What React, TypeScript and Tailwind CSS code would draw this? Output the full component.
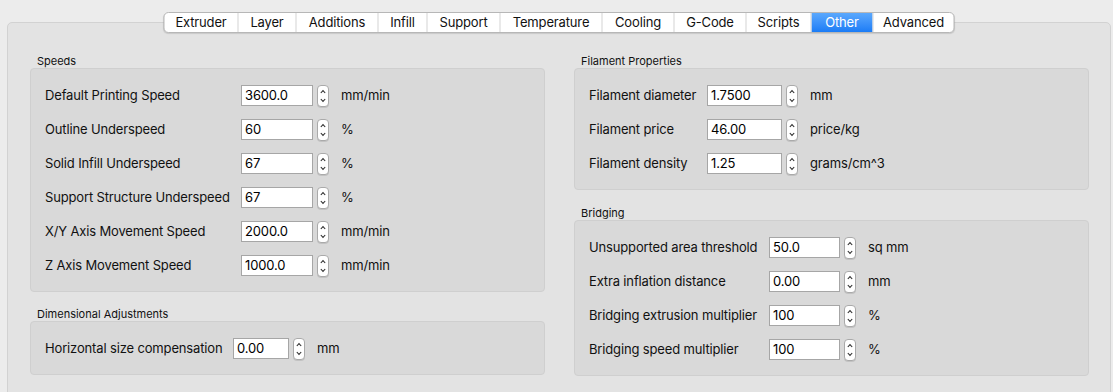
import React from 'react';

type Row = [string, string, string];

const tabs: [string, string][] = [
  ['Extruder', 'w-[73px]'],
  ['Layer', 'w-[58px]'],
  ['Additions', 'w-[82px]'],
  ['Infill', 'w-[49px]'],
  ['Support', 'w-[73px]'],
  ['Temperature', 'w-[102px]'],
  ['Cooling', 'w-[72px]'],
  ['G-Code', 'w-[72px]'],
  ['Scripts', 'w-[65px]'],
  ['Other', 'w-[62px]'],
  ['Advanced', 'w-[81px]'],
];

const speeds: Row[] = [
  ['Default Printing Speed', '3600.0', 'mm/min'],
  ['Outline Underspeed', '60', '%'],
  ['Solid Infill Underspeed', '67', '%'],
  ['Support Structure Underspeed', '67', '%'],
  ['X/Y Axis Movement Speed', '2000.0', 'mm/min'],
  ['Z Axis Movement Speed', '1000.0', 'mm/min'],
];

const dimensional: Row[] = [['Horizontal size compensation', '0.00', 'mm']];

const filament: Row[] = [
  ['Filament diameter', '1.7500', 'mm'],
  ['Filament price', '46.00', 'price/kg'],
  ['Filament density', '1.25', 'grams/cm^3'],
];

const bridging: Row[] = [
  ['Unsupported area threshold', '50.0', 'sq mm'],
  ['Extra inflation distance', '0.00', 'mm'],
  ['Bridging extrusion multiplier', '100', '%'],
  ['Bridging speed multiplier', '100', '%'],
];

// little up/down arrows next to each number field
function Stepper() {
  return (
    <div className="ml-[4px] w-[12px] h-[22px] shrink-0 rounded-[4px] border border-[#aaaaaa] bg-white shadow-[0_1px_0_rgba(0,0,0,0.1)]">
      <svg width="10" height="20" viewBox="0 0 10 20">
        <path d="M2.8 7 L5 4.6 L7.2 7" fill="none" stroke="#2e2e2e" strokeWidth="1.1" />
        <path d="M2.8 13 L5 15.4 L7.2 13" fill="none" stroke="#2e2e2e" strokeWidth="1.1" />
      </svg>
    </div>
  );
}

function Group({
  title,
  rows,
  labelW,
  inputW,
  className = '',
}: {
  title: string;
  rows: Row[];
  labelW: string;
  inputW: string;
  className?: string;
}) {
  return (
    <div className={className}>
      <div className="pl-[7px] h-[14px] text-[11px] leading-[14px] text-[#111]">{title}</div>
      <div className="rounded-[4px] border border-[#cfcfcf] bg-[#d9d9d9] pl-[14px] pt-[16px] pb-[15px] flex flex-col gap-[13px]">
        {rows.map(([label, value, unit]) => (
          <div key={label} className="flex items-center h-[21px] text-[13px] tracking-[-0.15px] text-[#111]">
            <div className={`${labelW} shrink-0 whitespace-nowrap`}>{label}</div>
            <div
              className={`${inputW} h-[21px] shrink-0 border border-[#a6a6a6] bg-white pl-[3px] leading-[19px] text-black`}
            >
              {value}
            </div>
            <Stepper />
            <div className="ml-[12px] whitespace-nowrap">{unit}</div>
          </div>
        ))}
      </div>
    </div>
  );
}

export default function App() {
  return (
    <div
      className="w-[1113px] h-[392px] overflow-hidden bg-[#ececec] pl-[7px] pr-[2px] pt-[22px]"
      style={{ fontFamily: 'Inter, "Liberation Sans", sans-serif' }}
    >
      <div className="relative h-[380px] rounded-[5px] border border-[#d2d2d2] bg-[#e3e3e3]">
        {/* Tab bar sits over the pane border */}
        <div className="absolute left-1/2 -translate-x-1/2 top-[-11px] flex h-[21px] rounded-[5px] border border-[#b7b7b7] bg-white overflow-hidden shadow-[0_1px_1px_rgba(0,0,0,0.12)]">
          {tabs.map(([name, w], i) => (
            <div
              key={name}
              className={`${w} flex items-center justify-center text-[13px] tracking-[-0.15px] leading-none ${
                i > 0 ? 'border-l border-[#d4d4d4]' : ''
              } ${name === 'Other' ? 'bg-linear-to-b from-[#5aa8fd] to-[#1a7cf6] text-white' : 'text-[#111]'}`}
            >
              {name}
            </div>
          ))}
        </div>

        <div className="grid grid-cols-2 gap-x-[29px] pl-[22px] pr-[21px] pt-[31px]">
          <div className="flex flex-col">
            <Group title="Speeds" rows={speeds} labelW="w-[196px]" inputW="w-[72px]" />
            <Group
              title="Dimensional Adjustments"
              rows={dimensional}
              labelW="w-[188px]"
              inputW="w-[56px]"
              className="mt-[15px]"
            />
          </div>
          <div className="flex flex-col">
            <Group title="Filament Properties" rows={filament} labelW="w-[118px]" inputW="w-[75px]" />
            <Group
              title="Bridging"
              rows={bridging}
              labelW="w-[180px]"
              inputW="w-[71px]"
              className="mt-[16px]"
            />
          </div>
        </div>
      </div>
    </div>
  );
}
